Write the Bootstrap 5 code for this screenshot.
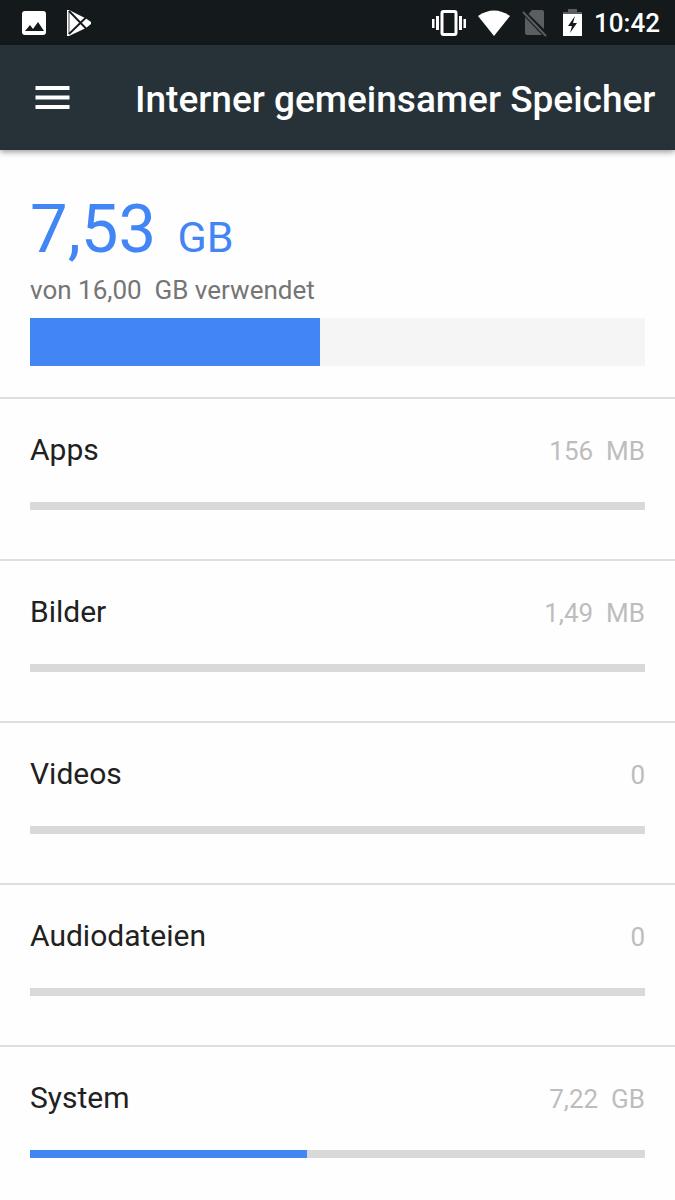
<!DOCTYPE html>
<html lang="de">
<head>
<meta charset="utf-8">
<meta name="viewport" content="width=device-width, initial-scale=1">
<title>Interner gemeinsamer Speicher</title>
<link href="https://cdn.jsdelivr.net/npm/bootstrap@5.3.0/dist/css/bootstrap.min.css" rel="stylesheet">
<style>
  body { font-family: Roboto, "Liberation Sans", sans-serif; color: #212121; background: #fefefe; }
  svg { display: block; flex: none; }
  .statusbar { height: 45px; background: #14191c; padding: 0 15px 0 22px; }
  .notifications { gap: 20px; }
  .indicators { gap: 12px; }
  .clock { font-size: 26px; line-height: 30px; font-weight: 500; }
  .appbar { height: 105px; background: #263238; padding: 0 16px 0 30px; box-shadow: 0 2px 6px rgba(0, 0, 0, .4); }
  .menu-btn { width: 45px; }
  .appbar h1 { font-size: 37px; line-height: 46px; font-weight: 500; margin-left: 60px; padding-top: 4px; }
  .summary { padding: 39px 30px 31px; }
  .used { font-size: 67px; line-height: 80px; color: #4285f4; }
  .used-unit { font-size: 43px; line-height: 1; }
  .total { font-size: 26px; line-height: 30px; margin-top: 6px; color: #757575; }
  .progress { --bs-progress-height: 8px; --bs-progress-bg: #d9d9d9; --bs-progress-bar-bg: #4285f4; --bs-progress-border-radius: 0; }
  .summary .progress { --bs-progress-height: 48px; --bs-progress-bg: #f5f5f5; margin-top: 13px; }
  .storage-item { border-top: 2px solid #dedede; padding: 33px 30px 49px; }
  .storage-item:last-child { padding-bottom: 40px; }
  .storage-item .progress { margin-top: 34px; }
  .item-name { font-size: 30px; line-height: 36px; }
  .item-size { font-size: 26px; line-height: 30px; color: #bdbdbd; }
</style>
</head>
<body>
<div class="statusbar d-flex align-items-center justify-content-between text-white">
  <div class="notifications d-flex align-items-center">
    <svg width="24" height="26" viewBox="0 0 24 26" role="img" aria-label="Bild">
      <rect y="1" width="24" height="24" rx="3" fill="#fff"/>
      <path d="M3 21l5-6 3 4 5-7 6 9z" fill="#14191c"/>
    </svg>
    <svg width="26" height="28" viewBox="0 0 26 28" role="img" aria-label="Play Store">
      <path d="M1 1L3 1 20 9.500 25 13 25 15 20 19 3 27 1 27z" fill="#fff"/>
      <path d="M3 2L20 19.500M3 25L20 8.500" stroke="#14191c" stroke-width="1.800" fill="none"/>
      <path d="M3 2v23" stroke="#14191c" stroke-width=".8" fill="none"/>
    </svg>
  </div>
  <div class="indicators d-flex align-items-center">
    <svg width="34" height="26" viewBox="0 0 34 26" role="img" aria-label="Vibration">
      <path d="M0 9h2.500v9H0zM4 6h3v14H4zM27 6h3v14h-3zM31.500 9H34v9h-2.500z" fill="#fff"/>
      <rect x="10" y="1.500" width="14" height="23" rx="1.500" fill="none" stroke="#fff" stroke-width="3"/>
    </svg>
    <svg width="32" height="26" viewBox="0 0 32 26" role="img" aria-label="WLAN">
      <path d="M0 6Q16 -5 32 6L16 26z" fill="#fff"/>
    </svg>
    <svg width="25" height="28" viewBox="0 0 25 28" role="img" aria-label="Keine SIM-Karte">
      <path d="M10 1h10q2 0 2 2v17L6.500 5zM3 8l17 18H5q-2 0-2-2z" fill="#5b5e60"/>
      <path d="M1 3l23 24" stroke="#5b5e60" stroke-width="2" fill="none"/>
    </svg>
    <svg class="ms-1" width="19" height="27" viewBox="0 0 19 27" role="img" aria-label="Akku wird geladen">
      <path d="M5 0h9v3h5v4H0V3h5z" fill="#5b5e60"/>
      <path d="M0 5h19v22H0z" fill="#fff"/>
      <path d="M12 7L5 17h4l-2 7 7-10h-4z" fill="#14191c"/>
    </svg>
    <span class="clock">10:42</span>
  </div>
</div>
<header class="appbar position-relative d-flex align-items-center text-white">
  <button type="button" class="menu-btn btn p-0 border-0 text-white" aria-label="Menü">
    <svg width="45" height="45" viewBox="0 0 45 45" fill="currentColor" aria-hidden="true">
      <path d="M5.500 11h34v4h-34zM5.500 20.500h34v4h-34zM5.500 30h34v4h-34z"/>
    </svg>
  </button>
  <h1 class="mb-0 text-nowrap">Interner gemeinsamer Speicher</h1>
</header>
<main>
  <section class="summary">
    <div class="used">7,53<span class="used-unit">&nbsp;&nbsp;GB</span></div>
    <div class="total">von 16,00&nbsp; GB verwendet</div>
    <div class="progress" role="progressbar" aria-label="Belegter Speicher" aria-valuenow="47" aria-valuemin="0" aria-valuemax="100"><div class="progress-bar" style="width:47.1%"></div></div>
  </section>
  <ul class="list-unstyled mb-0">
    <li class="storage-item">
      <div class="d-flex justify-content-between align-items-baseline"><span class="item-name">Apps</span><span class="item-size">156&nbsp; MB</span></div>
      <div class="progress" role="progressbar" aria-label="Apps" aria-valuenow="0" aria-valuemin="0" aria-valuemax="100"></div>
    </li>
    <li class="storage-item">
      <div class="d-flex justify-content-between align-items-baseline"><span class="item-name">Bilder</span><span class="item-size">1,49&nbsp; MB</span></div>
      <div class="progress" role="progressbar" aria-label="Bilder" aria-valuenow="0" aria-valuemin="0" aria-valuemax="100"></div>
    </li>
    <li class="storage-item">
      <div class="d-flex justify-content-between align-items-baseline"><span class="item-name">Videos</span><span class="item-size">0</span></div>
      <div class="progress" role="progressbar" aria-label="Videos" aria-valuenow="0" aria-valuemin="0" aria-valuemax="100"></div>
    </li>
    <li class="storage-item">
      <div class="d-flex justify-content-between align-items-baseline"><span class="item-name">Audiodateien</span><span class="item-size">0</span></div>
      <div class="progress" role="progressbar" aria-label="Audiodateien" aria-valuenow="0" aria-valuemin="0" aria-valuemax="100"></div>
    </li>
    <li class="storage-item">
      <div class="d-flex justify-content-between align-items-baseline"><span class="item-name">System</span><span class="item-size">7,22&nbsp; GB</span></div>
      <div class="progress" role="progressbar" aria-label="System" aria-valuenow="45" aria-valuemin="0" aria-valuemax="100"><div class="progress-bar" style="width:45.1%"></div></div>
    </li>
  </ul>
</main>
<script src="https://cdn.jsdelivr.net/npm/bootstrap@5.3.0/dist/js/bootstrap.bundle.min.js"></script>
</body>
</html>
